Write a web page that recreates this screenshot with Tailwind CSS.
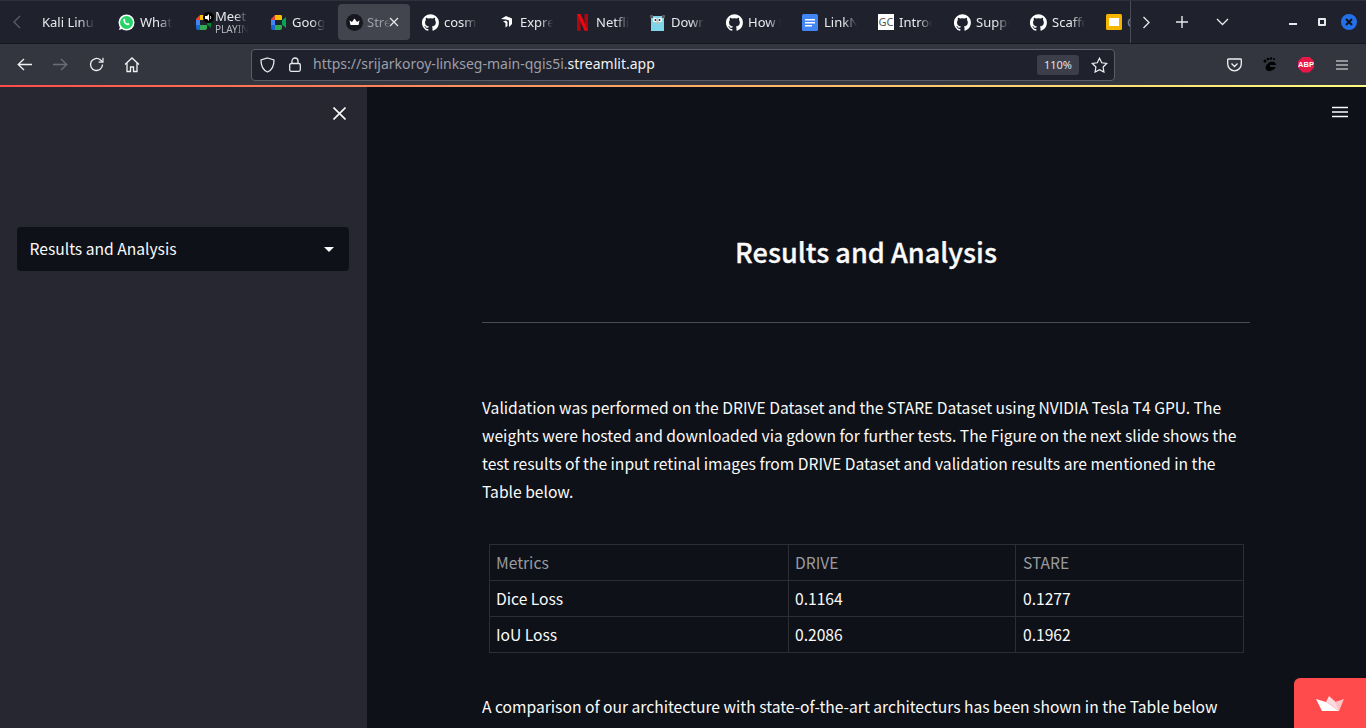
<!DOCTYPE html>
<html lang="en">
<head>
<meta charset="utf-8">
<title>Streamlit</title>
<script src="https://cdn.jsdelivr.net/npm/@tailwindcss/browser@4"></script>
</head>
<body class="w-[1366px] h-[728px] overflow-hidden bg-[#0e1117] font-['Noto_Sans',sans-serif]">
<div class="flex flex-col h-[728px]">
  <!-- tab strip -->
  <div class="h-[44px] shrink-0 bg-[#1f222d] border-t border-b border-t-[#2e313c] border-b-[#15171e] flex items-center text-[13px] text-[#e8e9ec]">
    <div class="w-[26px] h-full shrink-0 flex items-center justify-center pl-2">
      <svg width="10" height="14" viewBox="0 0 10 14" fill="none" stroke="#5b5e68" stroke-width="1.3"><path d="M8 1 2 7l6 6"/></svg>
    </div>
    <div class="w-[92px] h-full shrink-0 flex items-center pl-4">
      <span class="mt-[2px] w-[53px] overflow-hidden whitespace-nowrap [mask-image:linear-gradient(to_right,black_70%,transparent)]">Kali Linux</span>
    </div>
    <div class="w-[77px] h-full shrink-0 flex items-center gap-[5px]">
      <svg width="17" height="17" viewBox="0 0 17 17" class="shrink-0"><circle cx="8.500" cy="8.500" r="8" fill="#fff"/><circle cx="8.500" cy="8.500" r="6.500" fill="#25d366"/><path d="M5.500 5.200c.5-.6 1.200-.6 1.500 0l.5 1.200-.6.800c.5 1 1.200 1.700 2.300 2.300l.8-.6 1.200.6c.5.4.3 1.100-.3 1.500-2.600 1-6.400-2.700-5.400-5.800z" fill="#fff"/><path d="M1 16l1.200-4 2.600 2.700z" fill="#fff"/></svg>
      <span class="mt-[2px] w-[32px] overflow-hidden whitespace-nowrap [mask-image:linear-gradient(to_right,black_60%,transparent)]">What</span>
    </div>
    <div class="w-[75px] h-full shrink-0 flex items-center relative">
      <svg width="17" height="17" viewBox="0 0 17 17" class="shrink-0 mt-[1px]"><path d="M1 5 5 1v5H1z" fill="#ea4335"/><path d="M1 6h4v5H1z" fill="#4285f4"/><path d="M1 11h4v5H3c-1 0-2-1-2-2z" fill="#1967d2"/><path d="M5 1h6c1 0 1 1 1 2v3H5z" fill="#fbbc04"/><path d="M5 11h7v3c0 1-1 2-2 2H5z" fill="#34a853"/><path d="M12 6.500 16 3v11l-4-3.500z" fill="#00832d"/></svg>
      <div class="absolute left-[8px] top-[11px] w-[11px] h-[11px] rounded-full bg-black flex items-center justify-center">
        <svg width="9" height="9" viewBox="0 0 9 9"><path d="M1 3h2l2-2v7L3 6H1z" fill="#fff"/><path d="M6 3c1 .8 1 2.200 0 3" stroke="#fff" fill="none"/></svg>
      </div>
      <div class="flex flex-col ml-[3px] mt-[-2px] w-[33px] overflow-hidden whitespace-nowrap [mask-image:linear-gradient(to_right,black_60%,transparent)]">
        <span class="leading-[16px]">Meet</span>
        <span class="text-[10px] leading-[11px] text-[#b9bbc2]">PLAYING</span>
      </div>
    </div>
    <div class="w-[68px] h-full shrink-0 flex items-center gap-[5px]">
      <svg width="17" height="17" viewBox="0 0 17 17" class="shrink-0"><path d="M1 5 5 1v5H1z" fill="#ea4335"/><path d="M1 6h4v5H1z" fill="#4285f4"/><path d="M1 11h4v5H3c-1 0-2-1-2-2z" fill="#1967d2"/><path d="M5 1h6c1 0 1 1 1 2v3H5z" fill="#fbbc04"/><path d="M5 11h7v3c0 1-1 2-2 2H5z" fill="#34a853"/><path d="M12 6.500 16 3v11l-4-3.500z" fill="#00a651"/></svg>
      <span class="mt-[2px] w-[33px] overflow-hidden whitespace-nowrap [mask-image:linear-gradient(to_right,black_60%,transparent)]">Google</span>
    </div>
    <div class="w-[72px] h-[36px] shrink-0 rounded-[4px] bg-[#42444e] flex items-center pl-[8px] relative">
      <svg width="17" height="17" viewBox="0 0 17 17" class="shrink-0"><circle cx="8.500" cy="8.500" r="8.500" fill="#17181f"/><path d="M3.500 6.500 6 8l2.500-3.500L11 8l2.500-1.500L12.500 11h-8z" fill="#fff"/></svg>
      <span class="mt-[2px] ml-[4px] w-[24px] overflow-hidden whitespace-nowrap text-[#9d9fa8] [mask-image:linear-gradient(to_right,black_65%,transparent)]">Stre</span>
      <svg width="10" height="10" viewBox="0 0 10 10" class="absolute right-[11px] top-[13px]" stroke="#e8e9ec" stroke-width="1.200"><path d="M1 1l8 8M9 1 1 9"/></svg>
    </div>
    <div class="ml-[12px] w-[78px] h-full shrink-0 flex items-center gap-[5px]">
      <svg width="17" height="17" viewBox="0 0 24 24" fill="#fff" class="shrink-0"><path d="M12 .3a12 12 0 0 0-3.800 23.400c.6.100.8-.3.800-.6v-2c-3.300.7-4-1.600-4-1.600-.6-1.400-1.400-1.800-1.400-1.800-1-.7.100-.7.100-.7 1.200.1 1.800 1.200 1.800 1.200 1 1.800 2.800 1.300 3.500 1 .1-.8.400-1.300.8-1.600-2.700-.3-5.500-1.300-5.500-5.900 0-1.300.5-2.400 1.200-3.200-.1-.3-.5-1.500.1-3.200 0 0 1-.3 3.300 1.200a11.500 11.500 0 0 1 6 0c2.300-1.500 3.300-1.200 3.300-1.200.6 1.700.2 2.900.1 3.200.8.800 1.200 1.900 1.200 3.200 0 4.600-2.800 5.600-5.500 5.900.4.400.8 1.100.8 2.200v3.300c0 .3.200.7.800.6A12 12 0 0 0 12 .3z"/></svg>
      <span class="mt-[2px] w-[33px] overflow-hidden whitespace-nowrap [mask-image:linear-gradient(to_right,black_60%,transparent)]">cosmos</span>
    </div>
    <div class="w-[77px] h-full shrink-0 flex items-center gap-[7px]">
      <svg width="13" height="14" viewBox="0 0 13 14" fill="#fff" class="shrink-0"><path d="M1 4 6 1l6 2.500V9l-3 3V5.500L6 4.500z"/><path d="M3 6.500 6 5.500 7.500 7v4l-2 1.500V8z"/></svg>
      <span class="mt-[2px] w-[33px] overflow-hidden whitespace-nowrap [mask-image:linear-gradient(to_right,black_60%,transparent)]">Express</span>
    </div>
    <div class="w-[73px] h-full shrink-0 flex items-center gap-[8px]">
      <svg width="11" height="17" viewBox="0 0 11 17" class="shrink-0"><path d="M0 0h3.500v17L0 16.500z" fill="#b1060f"/><path d="M7.500 0H11v16.800l-3.500-.3z" fill="#b1060f"/><path d="M0 0h3.500L11 16.800l-3.500-.3z" fill="#e50914"/></svg>
      <span class="mt-[2px] w-[33px] overflow-hidden whitespace-nowrap [mask-image:linear-gradient(to_right,black_60%,transparent)]">Netflix</span>
    </div>
    <div class="w-[76px] h-full shrink-0 flex items-center gap-[6px]">
      <svg width="15" height="17" viewBox="0 0 15 17" class="shrink-0"><path d="M1 2h13v15H1z" fill="#7fd5ea"/><path d="M0 1h3v3H0zM12 1h3v3h-3z" fill="#5a5a5a"/><circle cx="5" cy="6" r="2.200" fill="#fff"/><circle cx="10" cy="6" r="2.200" fill="#fff"/><circle cx="5.500" cy="6" r="1" fill="#222"/><circle cx="9.500" cy="6" r="1" fill="#222"/><path d="M6.500 8h2v2h-2z" fill="#e8b88a"/></svg>
      <span class="mt-[2px] w-[33px] overflow-hidden whitespace-nowrap [mask-image:linear-gradient(to_right,black_60%,transparent)]">Down</span>
    </div>
    <div class="w-[76px] h-full shrink-0 flex items-center gap-[5px]">
      <svg width="17" height="17" viewBox="0 0 24 24" fill="#fff" class="shrink-0"><path d="M12 .3a12 12 0 0 0-3.800 23.400c.6.100.8-.3.800-.6v-2c-3.300.7-4-1.600-4-1.600-.6-1.400-1.400-1.800-1.400-1.800-1-.7.100-.7.100-.7 1.200.1 1.800 1.200 1.800 1.200 1 1.800 2.800 1.300 3.500 1 .1-.8.400-1.300.8-1.600-2.700-.3-5.500-1.300-5.500-5.900 0-1.300.5-2.400 1.200-3.200-.1-.3-.5-1.500.1-3.200 0 0 1-.3 3.300 1.200a11.500 11.500 0 0 1 6 0c2.300-1.500 3.300-1.200 3.300-1.200.6 1.700.2 2.900.1 3.200.8.800 1.200 1.900 1.200 3.200 0 4.600-2.800 5.600-5.500 5.900.4.400.8 1.100.8 2.200v3.300c0 .3.200.7.800.6A12 12 0 0 0 12 .3z"/></svg>
      <span class="mt-[2px] w-[33px] overflow-hidden whitespace-nowrap [mask-image:linear-gradient(to_right,black_60%,transparent)]">How to</span>
    </div>
    <div class="w-[76px] h-full shrink-0 flex items-center gap-[6px]">
      <svg width="16" height="17" viewBox="0 0 16 17" class="shrink-0"><rect width="16" height="17" rx="1.500" fill="#4285f4"/><path d="M3 5h10v1.500H3zM3 8h10v1.500H3zM3 11h7v1.500H3z" fill="#fff"/></svg>
      <span class="mt-[2px] w-[33px] overflow-hidden whitespace-nowrap [mask-image:linear-gradient(to_right,black_60%,transparent)]">LinkNet</span>
    </div>
    <div class="w-[76px] h-full shrink-0 flex items-center gap-[5px]">
      <div class="w-[16px] h-[16px] shrink-0 bg-white text-[#555] text-[11px] leading-[16px] text-center overflow-hidden">GC</div>
      <span class="mt-[2px] w-[33px] overflow-hidden whitespace-nowrap [mask-image:linear-gradient(to_right,black_60%,transparent)]">Introd</span>
    </div>
    <div class="w-[76px] h-full shrink-0 flex items-center gap-[5px]">
      <svg width="17" height="17" viewBox="0 0 24 24" fill="#fff" class="shrink-0"><path d="M12 .3a12 12 0 0 0-3.800 23.400c.6.100.8-.3.800-.6v-2c-3.300.7-4-1.600-4-1.600-.6-1.400-1.400-1.800-1.400-1.800-1-.7.100-.7.100-.7 1.200.1 1.800 1.200 1.800 1.200 1 1.800 2.800 1.300 3.500 1 .1-.8.400-1.300.8-1.600-2.700-.3-5.500-1.300-5.500-5.900 0-1.300.5-2.400 1.200-3.200-.1-.3-.5-1.500.1-3.200 0 0 1-.3 3.300 1.200a11.500 11.500 0 0 1 6 0c2.300-1.500 3.300-1.200 3.300-1.200.6 1.700.2 2.900.1 3.200.8.800 1.200 1.900 1.200 3.200 0 4.600-2.800 5.600-5.500 5.900.4.400.8 1.100.8 2.200v3.300c0 .3.200.7.800.6A12 12 0 0 0 12 .3z"/></svg>
      <span class="mt-[2px] w-[33px] overflow-hidden whitespace-nowrap [mask-image:linear-gradient(to_right,black_60%,transparent)]">Support</span>
    </div>
    <div class="w-[76px] h-full shrink-0 flex items-center gap-[5px]">
      <svg width="17" height="17" viewBox="0 0 24 24" fill="#fff" class="shrink-0"><path d="M12 .3a12 12 0 0 0-3.800 23.400c.6.100.8-.3.800-.6v-2c-3.300.7-4-1.600-4-1.600-.6-1.400-1.400-1.800-1.400-1.800-1-.7.100-.7.100-.7 1.200.1 1.800 1.200 1.800 1.200 1 1.800 2.800 1.300 3.500 1 .1-.8.400-1.300.8-1.600-2.700-.3-5.500-1.300-5.500-5.900 0-1.300.5-2.400 1.200-3.200-.1-.3-.5-1.500.1-3.200 0 0 1-.3 3.300 1.200a11.500 11.500 0 0 1 6 0c2.300-1.500 3.300-1.200 3.300-1.200.6 1.700.2 2.900.1 3.200.8.800 1.200 1.900 1.200 3.200 0 4.600-2.800 5.600-5.500 5.900.4.400.8 1.100.8 2.200v3.300c0 .3.200.7.800.6A12 12 0 0 0 12 .3z"/></svg>
      <span class="mt-[2px] w-[33px] overflow-hidden whitespace-nowrap [mask-image:linear-gradient(to_right,black_60%,transparent)]">Scaffold</span>
    </div>
    <div class="w-[24px] h-full shrink-0 flex items-center gap-[5px] overflow-hidden">
      <svg width="16" height="16" viewBox="0 0 16 16" class="shrink-0"><rect width="16" height="16" rx="1.500" fill="#f4b400"/><rect x="3" y="4" width="10" height="8" fill="#fff"/></svg>
      <span class="mt-[2px] text-[#8d8f98]">G</span>
    </div>
    <div class="w-[236px] h-full shrink-0 border-l border-[#4a4c56] flex items-center">
      <svg width="9" height="13" viewBox="0 0 9 13" fill="none" stroke="#e8e9ec" stroke-width="1.300" class="ml-[11px]"><path d="M1.500 1 7 6.500 1.500 12"/></svg>
      <svg width="12" height="12" viewBox="0 0 12 12" stroke="#e8e9ec" stroke-width="1.400" class="ml-[25px]"><path d="M6 0v12M0 6h12"/></svg>
      <svg width="13" height="8" viewBox="0 0 13 8" fill="none" stroke="#e8e9ec" stroke-width="1.300" class="ml-[28px]"><path d="M1 1l5.500 5.500L12 1"/></svg>
      <div class="w-[8px] h-[2px] bg-[#e8e9ec] ml-[60px] mt-[3px]"></div>
      <div class="w-[8px] h-[8px] border-2 border-[#e8e9ec] ml-[21px] rounded-[1px]"></div>
      <div class="w-[16px] h-[16px] rounded-full bg-[#2470e8] ml-[15px] flex items-center justify-center">
        <svg width="8" height="8" viewBox="0 0 8 8" stroke="#10131a" stroke-width="2"><path d="M1 1l6 6M7 1 1 7"/></svg>
      </div>
    </div>
  </div>
  <!-- nav toolbar -->
  <div class="h-[41px] shrink-0 bg-[#33363f] flex items-center">
    <svg width="15" height="13" viewBox="0 0 15 13" fill="none" stroke="#f1f1f3" stroke-width="1.300" class="ml-[17px]"><path d="M7 1 1.200 6.500 7 12M1.200 6.500H15"/></svg>
    <svg width="15" height="13" viewBox="0 0 15 13" fill="none" stroke="#6c6e77" stroke-width="1.300" class="ml-[21px]"><path d="M8 1l5.800 5.500L8 12M13.800 6.500H0"/></svg>
    <svg width="15" height="15" viewBox="0 0 15 15" fill="none" stroke="#f1f1f3" stroke-width="1.300" class="ml-[21px]"><path d="M13.500 7.500a6 6 0 1 1-2-4.500l2 1.800"/><path d="M14 .8v4.400H9.600" stroke-width="1.200"/></svg>
    <svg width="16" height="16" viewBox="0 0 16 16" fill="none" stroke="#f1f1f3" stroke-width="1.300" class="ml-[20px]"><path d="M1 7.500 8 1l7 6.500M3 6v8.500h3.500V10h3v4.500H13V6"/></svg>
    <div class="ml-[111px] w-[864px] h-[32px] rounded-[4px] bg-[#1f222d] border border-[#5a5c66] flex items-center text-[14px] text-[#9d9fa8]">
      <svg width="15" height="16" viewBox="0 0 15 16" fill="none" stroke="#e8e9ec" stroke-width="1.300" class="ml-[8px] shrink-0"><path d="M7.500 1 14 3c0 6-1.500 10-6.500 12C2.500 13 1 9 1 3z"/></svg>
      <svg width="12" height="15" viewBox="0 0 12 15" fill="none" stroke="#e8e9ec" stroke-width="1.300" class="ml-[14px] shrink-0"><rect x=".7" y="6.500" width="10.600" height="7.800" rx="1.500"/><path d="M3 6.500V4a3 3 0 0 1 6 0v2.500"/></svg>
      <span class="ml-[12px] mt-[-2px] whitespace-nowrap">https://srijarkoroy-linkseg-main-qgis5i.<span class="text-[#f1f1f3]">streamlit.app</span></span>
      <div class="ml-auto w-[42px] h-[20px] rounded-[3px] bg-[#3c3f49] text-[11px] leading-[20px] text-center text-[#e0e1e5]">110%</div>
      <svg width="17" height="16" viewBox="0 0 17 16" fill="none" stroke="#f1f1f3" stroke-width="1.200" class="ml-[12px] mr-[6px] shrink-0"><path d="M8.500 1.200 10.700 5.800l5 .7-3.600 3.500.8 5-4.400-2.400L4.100 15l.8-5L1.300 6.500l5-.7z"/></svg>
    </div>
    <svg width="15" height="14" viewBox="0 0 15 14" fill="none" stroke="#f1f1f3" stroke-width="1.300" class="ml-[112px]"><path d="M1.500 1h12c.5 0 .8.300.8.800V6a6.800 6.800 0 0 1-13.600 0V1.800c0-.5.300-.8.800-.8z"/><path d="M4.500 5.500l3 3 3-3"/></svg>
    <svg width="14" height="15" viewBox="0 0 14 15" fill="#000" class="ml-[21px]"><path d="M7 5c3-1 6 0 6 3 0 4-4 6-7 6-3 0-4-3-3-5 1-2 2-3 4-4z"/><circle cx="2" cy="4" r="1.500"/><circle cx="5" cy="2" r="1.300"/><circle cx="8" cy="1.500" r="1.200"/><circle cx="11" cy="2" r="1"/><path d="M7 8h6v2H7z" fill="#33363f"/></svg>
    <div class="ml-[21px] w-[16px] h-[16px] bg-[#e8194a] [clip-path:polygon(30%_0,70%_0,100%_30%,100%_70%,70%_100%,30%_100%,0_70%,0_30%)] text-white text-[7.500px] font-bold leading-[16px] text-center font-['Liberation_Sans',sans-serif] whitespace-nowrap">ABP</div>
    <svg width="12" height="10" viewBox="0 0 12 10" stroke="#f1f1f3" stroke-width="1.200" class="ml-[22px]"><path d="M0 1h12M0 5h12M0 9h12"/></svg>
  </div>
  <!-- loading bar -->
  <div class="h-[2px] shrink-0 bg-gradient-to-r from-[#ff4b4b] to-[#fffd80]"></div>
  <!-- app -->
  <div class="flex-1 min-h-0 flex relative font-['Noto_Sans_CJK_JP','Noto_Sans',sans-serif] text-[15.630px] text-[#fafafa]">
    <aside class="w-[367px] shrink-0 bg-[#262730] px-[17px] relative">
      <svg width="13" height="13" viewBox="0 0 13 13" stroke="#fafafa" stroke-width="1.600" class="absolute left-[333px] top-[20px]"><path d="M.5.5l12 12M12.500.5l-12 12"/></svg>
      <div class="mt-[140px] w-[332px] h-[44px] rounded-[4px] bg-[#0e1117] flex items-center justify-between pl-[12.500px] pr-[15px]">
        <span>Results and Analysis</span>
        <svg width="10" height="5" viewBox="0 0 10 5" fill="#fafafa"><path d="M0 0h10L5 5z"/></svg>
      </div>
    </aside>
    <main class="flex-1 min-w-0 pl-[115px] pr-[116px] overflow-hidden">
      <h1 class="mt-[143px] text-center text-[27.100px] font-medium leading-[44px] [-webkit-text-stroke:0.3px_#fafafa]">Results and Analysis</h1>
      <hr class="mt-[48px] border-0 border-t border-[#4a4c52]">
      <p class="mt-[71px] leading-[28px]">Validation was performed on the DRIVE Dataset and the STARE Dataset using NVIDIA Tesla T4 GPU. The weights were hosted and downloaded via gdown for further tests. The Figure on the next slide shows the test results of the input retinal images from DRIVE Dataset and validation results are mentioned in the Table below.</p>
      <table class="ml-[7px] mt-[38px] w-[755px] border-collapse table-fixed leading-[24px]">
        <colgroup><col class="w-[299px]"><col class="w-[227px]"><col class="w-[228px]"></colgroup>
        <thead>
          <tr class="h-[36px] text-[#9a9ba0]">
            <th class="border border-[#2c2e34] px-[6px] font-normal text-left">Metrics</th>
            <th class="border border-[#2c2e34] px-[6px] font-normal text-left">DRIVE</th>
            <th class="border border-[#2c2e34] px-[7px] font-normal text-left">STARE</th>
          </tr>
        </thead>
        <tbody>
          <tr class="h-[36px]">
            <td class="border border-[#2c2e34] px-[6px]">Dice Loss</td>
            <td class="border border-[#2c2e34] px-[6px]">0.1164</td>
            <td class="border border-[#2c2e34] px-[7px]">0.1277</td>
          </tr>
          <tr class="h-[36px]">
            <td class="border border-[#2c2e34] px-[6px]">IoU Loss</td>
            <td class="border border-[#2c2e34] px-[6px]">0.2086</td>
            <td class="border border-[#2c2e34] px-[7px]">0.1962</td>
          </tr>
        </tbody>
      </table>
      <p class="mt-[40px] leading-[28px] whitespace-nowrap">A comparison of our architecture with state-of-the-art architecturs has been shown in the Table below</p>
    </main>
    <svg width="20" height="14" viewBox="0 0 20 14" fill="none" stroke="#fafafa" class="absolute right-[16px] top-[18px]"><path d="M2 2.500h16M2 7h16M2 11.500h16" stroke-width="1.700"/></svg>
    <div class="absolute right-0 bottom-0 w-[72px] h-[50px] bg-[#ff4b4b] rounded-tl-[6px] flex items-center justify-center">
      <svg width="28" height="16" viewBox="0 0 28 16" class="mt-[1px] mr-[1px]"><path d="M13 0 22 8l1 7-13-9z" fill="#fcd9dc"/><path d="M19 6l9-3-5 12z" fill="#ffc2c6"/><path d="M0 3l10 3 13 9H6z" fill="#fff"/></svg>
    </div>
  </div>
</div>
</body>
</html>
